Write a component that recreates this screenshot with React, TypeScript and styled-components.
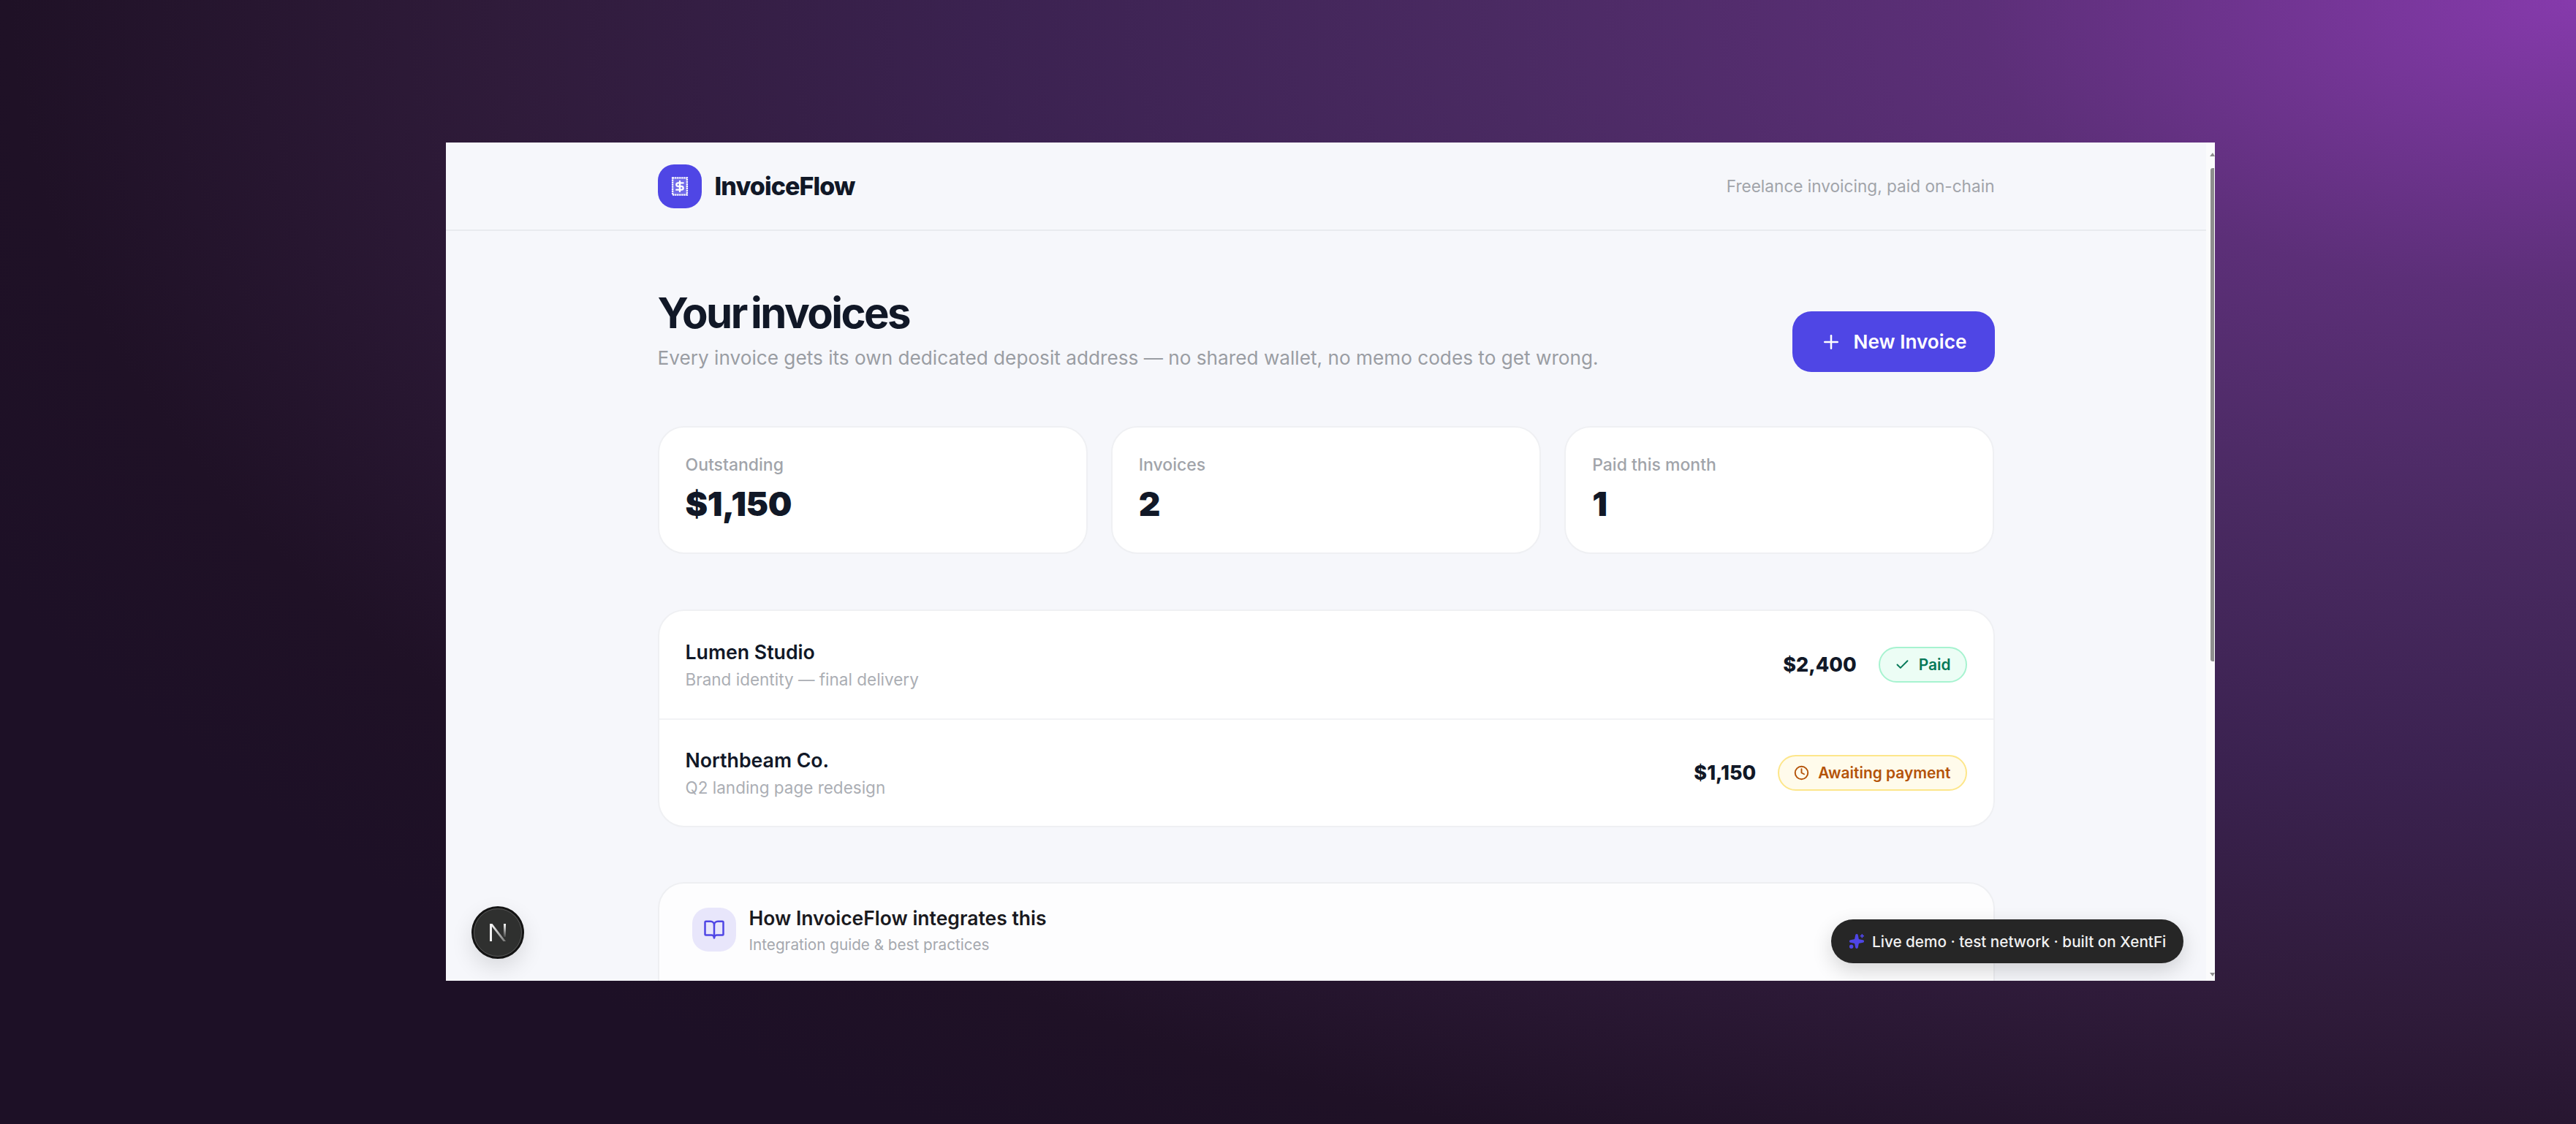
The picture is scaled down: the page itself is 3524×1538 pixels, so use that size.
import React from "react";
import styled, { createGlobalStyle } from "styled-components";
import { BookOpen, Check, Clock, Plus, Sparkles } from "lucide-react";

const Global = createGlobalStyle`
  html, body { margin: 0; height: 100%; }
  body { font-family: Inter, "Liberation Sans", sans-serif; background: #1c0f24; }
  #root { height: 100%; }
`;

const Desktop = styled.div`
  width: 3524px;
  height: 1538px;
  box-sizing: border-box;
  padding: 195px 0 0 610px;
  overflow: hidden;
  background: radial-gradient(
    ellipse 3900px 1900px at 100% 0%,
    #863aac 0%,
    #5c2f78 21%,
    #4a2a62 38%,
    #3b2250 56%,
    #2f1b3a 73%,
    #1f1126 90%,
    #1d1026 100%
  );
`;

const Win = styled.div`
  position: relative;
  width: 2420px;
  height: 1147px;
  overflow: hidden;
  background: #f6f7fb;
`;

const Scrollbar = styled.div`
  position: absolute;
  top: 0;
  right: 0;
  bottom: 0;
  width: 12px;
  background: #fbfbfc;
`;

const ScrollThumb = styled.div`
  position: absolute;
  top: 35px;
  left: 6px;
  width: 5px;
  height: 675px;
  background: #8e8e8e;
  border-radius: 3px 0 0 3px;
`;

const ArrowUp = styled.div`
  position: absolute;
  top: 14px;
  left: 5px;
  width: 0;
  height: 0;
  border-left: 4px solid transparent;
  border-right: 3px solid transparent;
  border-bottom: 5px solid #8e8e8e;
`;

const ArrowDown = styled.div`
  position: absolute;
  bottom: 6px;
  left: 5px;
  width: 0;
  height: 0;
  border-left: 4px solid transparent;
  border-right: 3px solid transparent;
  border-top: 5px solid #8e8e8e;
`;

const Scroller = styled.div`
  width: 2408px;
`;

const Header = styled.header`
  height: 121px;
  box-sizing: border-box;
  border-bottom: 2px solid #e9ebef;
  display: flex;
  justify-content: center;
`;

const HeaderInner = styled.div`
  width: 1829px;
  display: flex;
  align-items: center;
  justify-content: space-between;
`;

const Brand = styled.div`
  display: flex;
  align-items: center;
  gap: 18px;
`;

const LogoMark = styled.div`
  width: 60px;
  height: 60px;
  border-radius: 22px;
  background: #4f46e5;
  display: flex;
  align-items: center;
  justify-content: center;
`;

const BrandName = styled.span`
  font-size: 34px;
  font-weight: 800;
  letter-spacing: -0.9px;
  color: #111827;
`;

const Tagline = styled.span`
  font-size: 22.6px;
  color: #a1a4aa;
`;

const Main = styled.main`
  width: 1829px;
  margin: 0 auto;
  padding-top: 77px;
`;

const TitleRow = styled.div`
  display: flex;
  align-items: flex-end;
  justify-content: space-between;
`;

const Title = styled.h1`
  margin: 0;
  font-size: 58px;
  line-height: 70px;
  font-weight: 700;
  letter-spacing: -2.5px;
  word-spacing: -5px;
  color: #111827;
`;

const Subtitle = styled.p`
  margin: 8px 0 0;
  font-size: 26.2px;
  line-height: 38px;
  color: #9a9da3;
`;

const NewButton = styled.button`
  width: 277px;
  height: 83px;
  border: none;
  border-radius: 26px;
  background: #4f46e5;
  color: #fff;
  font: 600 26.2px Inter, sans-serif;
  display: flex;
  align-items: center;
  justify-content: center;
  gap: 16px;
`;

const Stats = styled.div`
  margin-top: 74px;
  display: grid;
  grid-template-columns: repeat(3, 1fr);
  gap: 32px;
`;

const StatCard = styled.div`
  height: 175px;
  box-sizing: border-box;
  padding: 36px;
  background: #fff;
  border: 2px solid #eff0f3;
  border-radius: 36px;
`;

const StatLabel = styled.div`
  font-size: 23px;
  line-height: 30px;
  font-weight: 500;
  color: #a1a4aa;
`;

const StatValue = styled.div`
  margin-top: 10px;
  font-size: 46px;
  line-height: 56px;
  font-weight: 900;
  letter-spacing: -0.5px;
  color: #111827;
`;

const InvoiceList = styled.div`
  margin-top: 76px;
  background: #fff;
  border: 2px solid #eff0f3;
  border-radius: 36px;
  overflow: hidden;
`;

const Row = styled.div`
  height: 147px;
  box-sizing: border-box;
  padding: 0 36px;
  display: flex;
  align-items: center;
  justify-content: space-between;
  & + & {
    border-top: 2px solid #f2f3f5;
  }
`;

const ClientName = styled.div`
  font-size: 26.7px;
  line-height: 38px;
  font-weight: 600;
  color: #111827;
`;

const ClientDesc = styled.div`
  margin-top: 2px;
  font-size: 22.5px;
  line-height: 34px;
  color: #abaeb4;
`;

const RowEnd = styled.div`
  display: flex;
  align-items: center;
  gap: 30px;
`;

const Amount = styled.span`
  font-size: 27px;
  font-weight: 800;
  color: #111827;
`;

const Pill = styled.span<{ $tone: "paid" | "waiting" }>`
  height: 49px;
  box-sizing: border-box;
  padding: 0 20px;
  display: inline-flex;
  align-items: center;
  gap: 12px;
  border-radius: 25px;
  font-size: 20.9px;
  font-weight: 600;
  border: 2px solid ${(p) => (p.$tone === "paid" ? "#a7f3d0" : "#fde68a")};
  background: ${(p) => (p.$tone === "paid" ? "#ecfdf5" : "#fffbeb")};
  color: ${(p) => (p.$tone === "paid" ? "#047857" : "#b45309")};
`;

const Guide = styled.section`
  margin-top: 75px;
  height: 300px;
  box-sizing: border-box;
  padding: 33px 45px;
  display: flex;
  align-items: flex-start;
  gap: 18px;
  background: #fdfdfe;
  border: 2px solid #eeeff2;
  border-radius: 36px;
`;

const GuideIcon = styled.div`
  width: 60px;
  height: 60px;
  border-radius: 22px;
  background: #e8e6fb;
  color: #4f46e5;
  display: flex;
  align-items: center;
  justify-content: center;
`;

const GuideTitle = styled.div`
  font-size: 26.5px;
  line-height: 28px;
  font-weight: 600;
  color: #1a1a1f;
`;

const GuideSub = styled.div`
  margin-top: 8px;
  font-size: 20.7px;
  line-height: 30px;
  color: #a5a8ae;
`;

const DevBadge = styled.div`
  position: absolute;
  left: 35px;
  bottom: 30px;
  width: 72px;
  height: 72px;
  box-sizing: border-box;
  border: 3px solid #141414;
  outline: 1px solid #555;
  outline-offset: -4px;
  border-radius: 50%;
  background: #2f302f;
  display: flex;
  align-items: center;
  justify-content: center;
  box-shadow: 0 12px 30px rgba(0, 0, 0, 0.12);
`;

const Toast = styled.div`
  position: absolute;
  left: 1895px;
  top: 1063px;
  width: 482px;
  height: 60px;
  box-sizing: border-box;
  padding-left: 24px;
  border-radius: 30px;
  background: #262626;
  color: #f1f1f1;
  font-size: 20.7px;
  font-weight: 500;
  white-space: nowrap;
  display: flex;
  align-items: center;
  gap: 10px;
  box-shadow: 0 10px 28px rgba(0, 0, 0, 0.16);
`;

const stats = [
  { label: "Outstanding", value: "$1,150" },
  { label: "Invoices", value: "2" },
  { label: "Paid this month", value: "1" },
];

export default function App() {
  return (
    <>
      <Global />
      <Desktop>
        <Win>
          <Scroller>
            <Header>
              <HeaderInner>
                <Brand>
                  <LogoMark>
                    <svg width="28" height="28" viewBox="0 0 24 24" fill="none">
                      <rect x="3.5" y="2" width="17" height="20" fill="rgba(255,255,255,0.2)" stroke="#fff" strokeWidth="2" strokeDasharray="2 0.6" />
                      <path d="M16 8h-6a2 2 0 1 0 0 4h4a2 2 0 1 1 0 4H8" stroke="#fff" strokeWidth="2" strokeLinecap="round" />
                      <path d="M12 18v-12" stroke="#fff" strokeWidth="2" strokeLinecap="round" />
                    </svg>
                  </LogoMark>
                  <BrandName>InvoiceFlow</BrandName>
                </Brand>
                <Tagline>Freelance invoicing, paid on-chain</Tagline>
              </HeaderInner>
            </Header>
            <Main>
              <TitleRow>
                <div>
                  <Title>Your invoices</Title>
                  <Subtitle>Every invoice gets its own dedicated deposit address — no shared wallet, no memo codes to get wrong.</Subtitle>
                </div>
                <NewButton>
                  <Plus size={30} strokeWidth={2} />
                  New Invoice
                </NewButton>
              </TitleRow>
              <Stats>
                {stats.map((s) => (
                  <StatCard key={s.label}>
                    <StatLabel>{s.label}</StatLabel>
                    <StatValue>{s.value}</StatValue>
                  </StatCard>
                ))}
              </Stats>
              <InvoiceList>
                <Row>
                  <div>
                    <ClientName>Lumen Studio</ClientName>
                    <ClientDesc>Brand identity — final delivery</ClientDesc>
                  </div>
                  <RowEnd>
                    <Amount>$2,400</Amount>
                    <Pill $tone="paid">
                      <Check size={21} strokeWidth={2.2} />
                      Paid
                    </Pill>
                  </RowEnd>
                </Row>
                <Row>
                  <div>
                    <ClientName>Northbeam Co.</ClientName>
                    <ClientDesc>Q2 landing page redesign</ClientDesc>
                  </div>
                  <RowEnd>
                    <Amount>$1,150</Amount>
                    <Pill $tone="waiting">
                      <Clock size={21} strokeWidth={2.2} />
                      Awaiting payment
                    </Pill>
                  </RowEnd>
                </Row>
              </InvoiceList>
              <Guide>
                <GuideIcon>
                  <BookOpen size={30} strokeWidth={2} />
                </GuideIcon>
                <div>
                  <GuideTitle>How InvoiceFlow integrates this</GuideTitle>
                  <GuideSub>Integration guide &amp; best practices</GuideSub>
                </div>
              </Guide>
            </Main>
          </Scroller>
          <Scrollbar>
            <ArrowUp />
            <ScrollThumb />
            <ArrowDown />
          </Scrollbar>
          <DevBadge>
            <svg width="24" height="26" viewBox="0 0 24 26" fill="none">
              <defs>
                <linearGradient id="nDiag" x1="0" y1="0" x2="1" y2="1">
                  <stop offset="0%" stopColor="#ffffff" />
                  <stop offset="100%" stopColor="#ffffff" stopOpacity="0.35" />
                </linearGradient>
                <linearGradient id="nStem" x1="0" y1="0" x2="0" y2="1">
                  <stop offset="0%" stopColor="#ffffff" />
                  <stop offset="100%" stopColor="#ffffff" stopOpacity="0.1" />
                </linearGradient>
              </defs>
              <path d="M1 1h3v24H1z" fill="#f2f2f2" />
              <path d="M1 1h3.5L23 25h-3.5z" fill="url(#nDiag)" />
              <path d="M20 1h3v18h-3z" fill="url(#nStem)" />
            </svg>
          </DevBadge>
          <Toast>
            <Sparkles size={22} color="#4f46e5" fill="#4f46e5" />
            Live demo · test network · built on XentFi
          </Toast>
        </Win>
      </Desktop>
    </>
  );
}
